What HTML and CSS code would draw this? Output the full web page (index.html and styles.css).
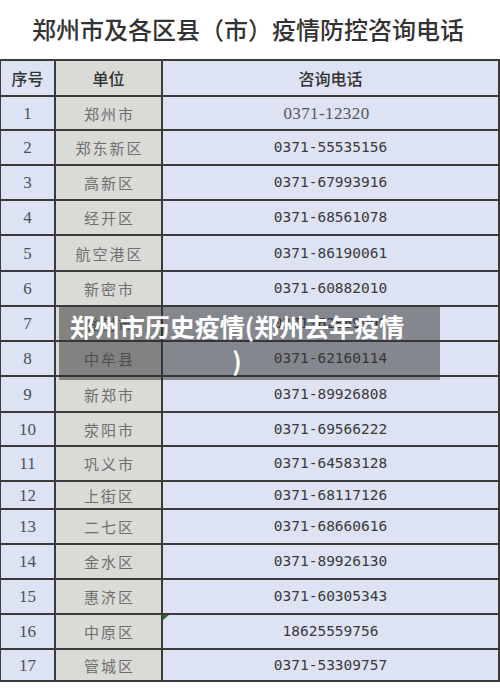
FILE: index.html
```html
<!DOCTYPE html>
<html lang="zh-CN">
<head>
<meta charset="utf-8">
<title>郑州市疫情防控咨询电话</title>
<link rel="stylesheet" href="styles.css">
</head>
<body>
<div class="page">
  <h1 class="title">郑州市及各区县（市）疫情防控咨询电话</h1>
  <div class="sheet">
    <table class="tbl">
      <colgroup><col class="c1"><col class="c2"><col class="c3"></colgroup>
      <tr class="head h36"><th class="no">序号</th><th class="unit">单位</th><th class="tel">咨询电话</th></tr>
      <tr class="h34"><td class="no">1</td><td class="unit">郑州市</td><td class="tel serif">0371-12320</td></tr>
      <tr class="h35"><td class="no">2</td><td class="unit">郑东新区</td><td class="tel">0371-55535156</td></tr>
      <tr class="h35"><td class="no">3</td><td class="unit">高新区</td><td class="tel">0371-67993916</td></tr>
      <tr class="h35"><td class="no">4</td><td class="unit">经开区</td><td class="tel">0371-68561078</td></tr>
      <tr class="h36"><td class="no">5</td><td class="unit">航空港区</td><td class="tel">0371-86190061</td></tr>
      <tr class="h35"><td class="no">6</td><td class="unit">新密市</td><td class="tel">0371-60882010</td></tr>
      <tr class="h35"><td class="no">7</td><td class="unit">登封市</td><td class="tel">0371-62869999</td></tr>
      <tr class="h35"><td class="no">8</td><td class="unit">中牟县</td><td class="tel">0371-62160114</td></tr>
      <tr class="h36"><td class="no">9</td><td class="unit">新郑市</td><td class="tel">0371-89926808</td></tr>
      <tr class="h34"><td class="no">10</td><td class="unit">荥阳市</td><td class="tel">0371-69566222</td></tr>
      <tr class="h35"><td class="no">11</td><td class="unit">巩义市</td><td class="tel">0371-64583128</td></tr>
      <tr class="h28"><td class="no">12</td><td class="unit">上街区</td><td class="tel">0371-68117126</td></tr>
      <tr class="h35"><td class="no">13</td><td class="unit">二七区</td><td class="tel">0371-68660616</td></tr>
      <tr class="h35"><td class="no">14</td><td class="unit">金水区</td><td class="tel">0371-89926130</td></tr>
      <tr class="h35"><td class="no">15</td><td class="unit">惠济区</td><td class="tel">0371-60305343</td></tr>
      <tr class="h35"><td class="no">16</td><td class="unit">中原区</td><td class="tel marked">18625559756</td></tr>
      <tr class="h32"><td class="no">17</td><td class="unit">管城区</td><td class="tel">0371-53309757</td></tr>
    </table>
    <div class="caption">郑州市历史疫情(郑州去年疫情)</div>
  </div>
</div>
</body>
</html>
```

FILE: styles.css
```css
html, body {
  margin: 0;
  padding: 0;
  background: #ffffff;
}

.page {
  width: 500px;
  height: 688px;
  overflow: hidden;
  background: #ffffff;
}

.title {
  margin: 0;
  height: 59px;
  display: flex;
  align-items: center;
  justify-content: center;
  font-family: "Noto Sans CJK SC", sans-serif;
  font-size: 24px;
  font-weight: 500;
  color: #333333;
  padding-bottom: 2px;
  padding-right: 4px;
  box-sizing: border-box;
}

.sheet {
  position: relative;
  width: 500px;
}

.tbl {
  border-collapse: collapse;
  width: 499px;
  table-layout: fixed;
  margin-left: -1px;
}

.c1 { width: 55px; }
.c2 { width: 107px; }
.c3 { width: 337px; }

.tbl th,
.tbl td {
  border: 2px solid #3b3b3b;
  padding: 0;
  text-align: center;
  vertical-align: middle;
  line-height: 1;
}

.h36 { height: 36px; }
.h35 { height: 35px; }
.h34 { height: 34px; }
.h32 { height: 32px; }
.h28 { height: 28px; }

.no,
.tel {
  background: #dde3f3;
}

.unit {
  background: #dadad7;
}

.head th {
  font-family: "Noto Sans CJK SC", sans-serif;
  font-size: 16px;
  font-weight: 500;
  color: #333333;
}

td.no {
  font-family: "Liberation Serif", serif;
  font-size: 17px;
  color: #4a4f5c;
}

td.unit {
  font-family: "Noto Sans CJK SC", sans-serif;
  font-size: 15px;
  font-weight: 400;
  color: #6f6f6f;
  letter-spacing: 2px;
  text-indent: 2px;
}

td.tel {
  font-family: "DejaVu Sans Mono", monospace;
  font-size: 14.5px;
  color: #3a3a3a;
  position: relative;
}

td.tel.serif {
  font-family: "Liberation Serif", serif;
  font-size: 17px;
  color: #555555;
  letter-spacing: 0.4px;
  padding-right: 8px;
}

td.marked::before {
  content: "";
  position: absolute;
  left: 0;
  top: 0;
  width: 0;
  height: 0;
  border-top: 5px solid #2d6a2d;
  border-right: 6px solid transparent;
}

.caption {
  position: absolute;
  left: 59px;
  top: 247px;
  width: 381px;
  height: 74px;
  box-sizing: border-box;
  padding: 3px 34px 0 9px;
  background: rgba(50, 50, 50, 0.52);
  color: #ffffff;
  font-family: "Noto Sans CJK SC", sans-serif;
  font-weight: 700;
  font-size: 25px;
  line-height: 34px;
  text-align: center;
  line-break: anywhere;
}
```
